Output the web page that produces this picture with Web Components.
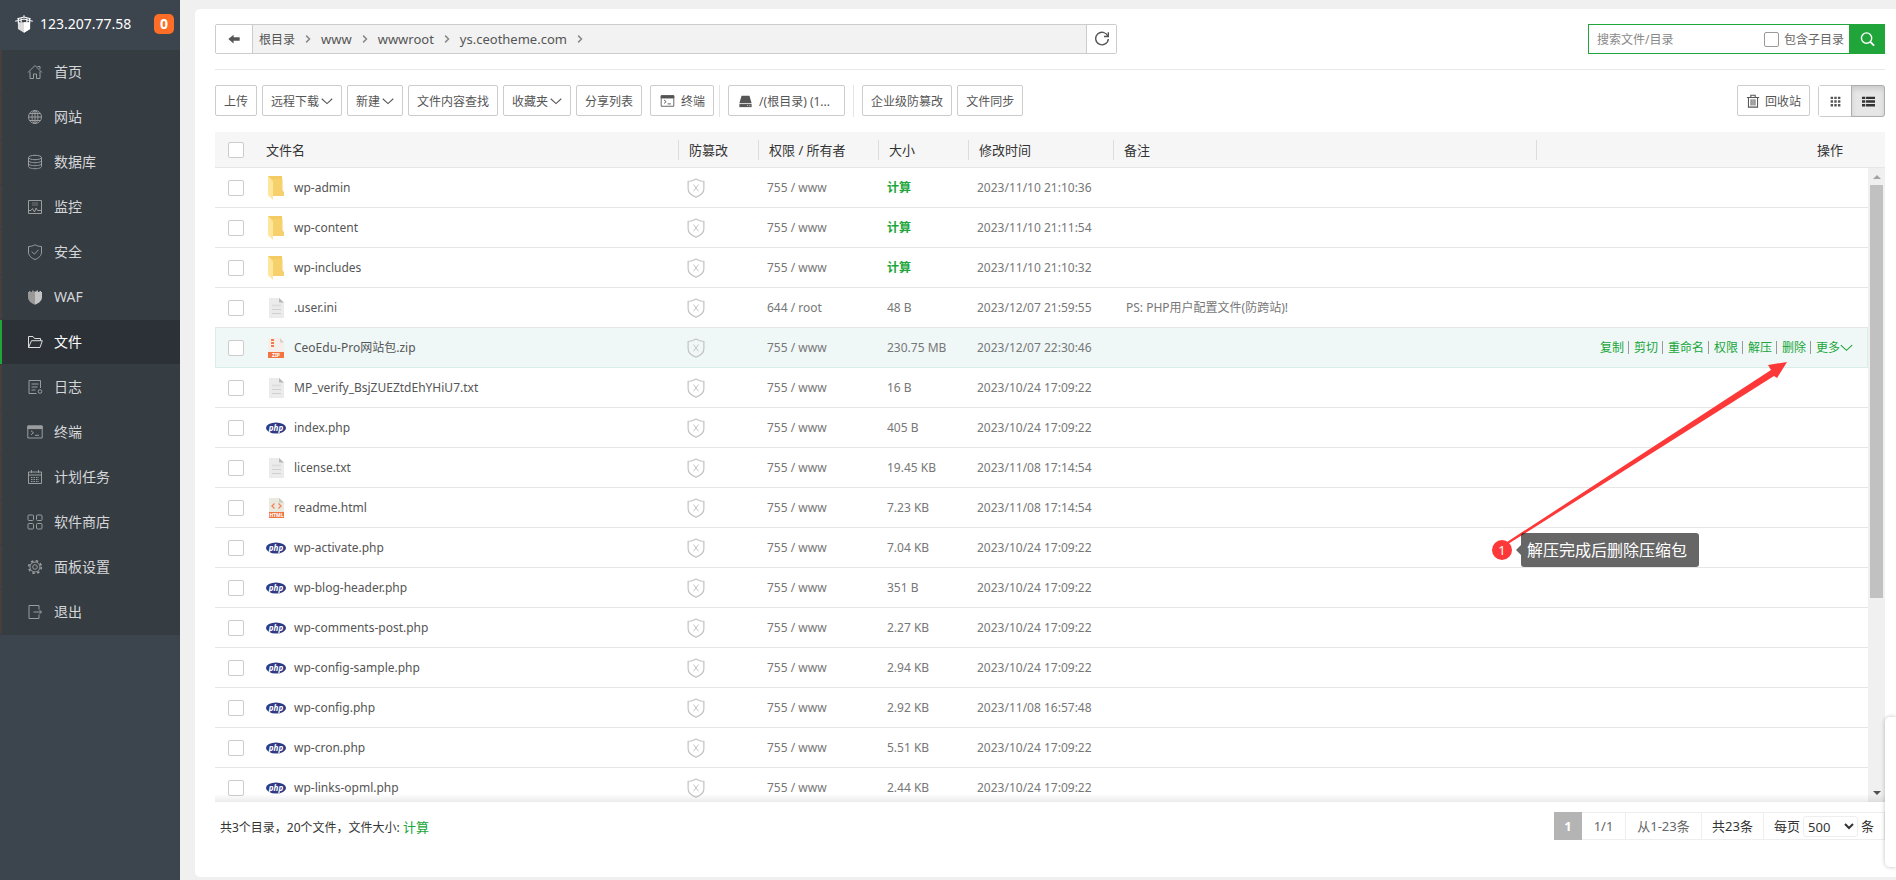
<!DOCTYPE html>
<html lang="zh-CN">
<head>
<meta charset="utf-8">
<title>文件 - 服务器面板</title>
<style>
html, body { margin: 0; height: 100%; }
body { font-family: "Noto Sans", "Noto Sans CJK SC", sans-serif; font-size: 12px; color: #666; background: #f0f0f0; overflow: hidden; }
</style>
</head>
<body>
<panel-app></panel-app>
<script>
const ICONS = {
  home: '<path d="M1 8.500 8 1.500l7 7M3 7.500V14.500h3.500V10h3v4.500H13V7.500M10.500 2.500h2.500v2.500"/>',
  globe: '<circle cx="8" cy="8" r="6.500"/><ellipse cx="8" cy="8" rx="3" ry="6.500"/><path d="M8 1.500v13M1.500 8h13M2.500 4.500h11M2.500 11.500h11"/>',
  db: '<ellipse cx="8" cy="3.500" rx="6.500" ry="2.200"/><path d="M1.500 3.500v9c0 1.200 2.900 2.200 6.500 2.200s6.500-1 6.500-2.200v-9M1.500 6.500c0 1.200 2.900 2.200 6.500 2.200s6.500-1 6.500-2.200M1.500 9.500c0 1.200 2.900 2.200 6.500 2.200s6.500-1 6.500-2.200"/>',
  monitor: '<path d="M1.500 1.500h13v13h-13z"/><path d="M5 4h6M5 6h6" stroke-opacity=".6"/><path d="M2 11.500h2l1.500-2 2 3.500 1.500-4 1.500 2.500h4"/>',
  shield: '<path d="M8 .8c2.200 1.200 4.500 1.700 6.500 1.700V8c0 3.500-2.500 6-6.500 7.500C4 14 1.500 11.500 1.500 8V2.500C3.500 2.500 5.800 2 8 .8zM4.800 7.500l2.600 2.700 4-4.400"/>',
  waf: '<path d="M1 3h1v-1h1.500v1H5V1.500h1.500v1H8V15.800C3.500 14 1 11.500 1 8z" fill="#999" stroke="none"/><path d="M15 3h-1v-1h-1.500v1H11V1.500H9.500v1H8V15.800C12.500 14 15 11.500 15 8z" fill="#c4c4c4" stroke="none"/>',
  folder: '<path d="M1.500 13.500V2.500h4.500l1.500 2h6v2.200M1.500 13.500 4.500 6.700h10.800L13 13.500z"/>',
  log: '<path d="M9.500 14.500H2V1.500h11.500v7.500M4.500 5h7M4.500 8h6M4.500 11h4"/><circle cx="13" cy="12.500" r="1.800"/>',
  term: '<path d="M.8 2h14.400v12H.8z"/><path d="M.8 2h14.400v2.600H.8z" fill="currentColor"/><path d="M4 6.800l2.500 2L4 10.800M8 11.300h4"/>',
  cal: '<path d="M1.500 3h13v11.500h-13zM1.500 6h13M4.500 1v3M11.500 1v3"/><path d="M4 8.500h8M4 10.500h8M4 12.500h8" stroke-dasharray="1.500 1"/>',
  grid: '<rect x="1" y="1" width="5.500" height="5.500" rx="1"/><rect x="9.500" y="1" width="5.500" height="5.500" rx="1"/><rect x="1" y="9.500" width="5.500" height="5.500" rx="1"/><rect x="9.500" y="9.500" width="5.500" height="5.500" rx="1"/>',
  gear: '<circle cx="8" cy="8" r="2.300"/><circle cx="8" cy="8" r="5"/><circle cx="8" cy="8" r="6.300" stroke-width="1.600" stroke-dasharray="2.500 2.448"/>',
  exit: '<path d="M12 5V1.500H2v13h10V11M6.500 8h8M12 5.500 14.500 8 12 10.500"/>',
  logo: '<path d="M2.600 6.500h10.800v6L8 15.800l-5.400-3.300z" fill="#dcdcdc" stroke="none"/><path d="M8 6.500h5.400v6L8 15.800z" fill="#fff" stroke="none"/><path d="M8 .2v2M2 3.300 8 1.800l6 1.500M.2 5.600 8 3.600l7.800 2M3 3.500v4M13 3.500v4M5.500 3v3.500M10.500 3v3.500"/>',
  back: '<path d="M1.500 8 7.500 3v3h7v4h-7v3z" fill="currentColor" stroke="none"/>',
  refresh: '<path d="M13.800 5A6.300 6.300 0 1 0 14.300 8" stroke-width="1.400"/><path d="M14.300 1.200v4.300H10" stroke-width="1.400"/>',
  right: '<path d="M5.500 3.500 10 8l-4.500 4.500" stroke-width="2" stroke="#888"/>',
  down: '<path d="M1 5 8 11.500 15 5" stroke-width="1.400"/>',
  disk: '<path d="M3.500 2h9L15 10.500H1z" fill="currentColor" stroke="none"/><path d="M1 11.500h14V15H1z" fill="currentColor" stroke="none"/><path d="M10 13.300h1M12.500 13.300h1" stroke="#fff"/>',
  trash: '<path d="M1 4h14M5.500 4V1.500h5V4M2.800 4v11h10.400V4M5.800 6v7M8 6v7M10.200 6v7" stroke-width="1.200"/>',
  tiles: '<path d="M2 2h3v3H2zM6.500 2h3v3h-3zM11 2h3v3h-3zM2 6.500h3v3H2zM6.500 6.500h3v3h-3zM11 6.500h3v3h-3zM2 11h3v3H2zM6.500 11h3v3h-3zM11 11h3v3h-3z" fill="currentColor" stroke="none"/>',
  list: '<path d="M0 2h4v3H0zM5 2h11v3H5zM0 6.500h4v3H0zM5 6.500h11v3H5zM0 11h4v3H0zM5 11h11v3H5z" fill="currentColor" stroke="none"/>',
  search: '<circle cx="7" cy="7" r="5.500" stroke-width="1.500"/><path d="m11 11 4 4" stroke-width="2"/>',
  lock: '<path d="M8 .8c2 1.300 4 1.900 6.300 2V8.500c0 3-2.300 5.300-6.300 6.800-4-1.500-6.300-3.800-6.300-6.800V2.800C4 2.700 6 2.100 8 .8z"/><path d="M6 5.200l4 5.400M10 5.200 6 10.600" stroke-width=".8"/>',
  php: '<ellipse cx="10" cy="10" rx="10" ry="5.600" fill="#2f3a85" stroke="none"/><text x="10" y="12.500" text-anchor="middle" font-family="Noto Sans" font-style="italic" font-weight="700" font-size="8" fill="#fff" stroke="none">php</text>',
  dir: '<path d="M2 0h14v13l2 6H7z" fill="#f3cb62" stroke="none"/><path d="M7 3h9.500v12.500H18V20H7z" fill="#f6d06b" stroke="none"/><path d="M2 0 7 5v19l-5-5z" fill="#ffe69b" stroke="none"/>',
  doc: '<path d="M3 0h10l5 4.500V20H3z" fill="#ebebeb" stroke="none"/><path d="M13 0v4.500h5z" fill="#b8b8b8" stroke="none"/><path d="M6 7.500h9" stroke="#ddd" stroke-width="2"/><path d="M6 11.500h9M6 15.500h9" stroke="#cfcfcf"/>',
  zip: '<path d="M2 0h12l4 4.500V15H2z" fill="#f4efea" stroke="none"/><path d="M14 0v4.500h4z" fill="#d9cfc7" stroke="none"/><path d="M6.500 1v9" stroke="#f47c4b" stroke-width="3" stroke-dasharray="2 1"/><path d="M2 14h16v6H2z" fill="#f37440" stroke="none"/><text x="10" y="19" text-anchor="middle" font-family="Noto Sans" font-weight="700" font-size="5" fill="#fff" stroke="none">ZIP</text>',
  html: '<path d="M3 0h10l5 4.500V20H3z" fill="#e9e9df" stroke="none"/><path d="M13 0v4.500h5z" fill="#c9c9bd" stroke="none"/><path d="M8.500 5.500 6 8l2.500 2.500M12.500 5.500 15 8l-2.500 2.500" stroke="#f4845a" stroke-width="1.300"/><path d="M3 14h15v6H3z" fill="#f37440" stroke="none"/><text x="10.500" y="19" text-anchor="middle" font-family="Noto Sans" font-weight="700" font-size="5" fill="#fff" stroke="none">HTML</text>'
};
const VIEW = { php: '0 0 20 20', dir: '0 0 20 24', doc: '0 0 20 20', zip: '0 0 20 20', html: '0 0 20 20', lock: '1 0 14 16' };

class Base extends HTMLElement {
  constructor() { super(); this.attachShadow({ mode: 'open' }); }
  connectedCallback() { this.shadowRoot.innerHTML = this.render(); }
}

customElements.define('ui-icon', class extends Base {
  render() {
    const n = this.getAttribute('name');
    return `<style>:host{display:inline-flex;flex:none;width:var(--icon-w,16px);height:var(--icon-h,16px)}svg{width:100%;height:100%;display:block}</style>
    <svg viewBox="${VIEW[n] || '0 0 16 16'}" fill="none" stroke="currentColor" stroke-width="1" aria-hidden="true">${ICONS[n]}</svg>`;
  }
});

customElements.define('side-item', class extends Base {
  render() {
    return `<style>
    :host{display:block;border-bottom:1px solid #353c42}
    a{display:flex;align-items:center;gap:11px;height:44px;padding-left:25px;border-left:2px solid #463f3d;color:#d5d7d9;font-size:14px;text-decoration:none}
    span{padding-bottom:2px}
    ui-icon{color:#9b9d9f;}
    :host([active]) a{background:#2c3138;border-left-color:#20a53a;color:#fff}
    :host([active]) ui-icon{color:#ddd}
    </style><a href="#"><ui-icon name="${this.getAttribute('icon')}"></ui-icon><span><slot></slot></span></a>`;
  }
});

customElements.define('side-menu', class extends Base {
  render() {
    const items = [['home','首页'],['globe','网站'],['db','数据库'],['monitor','监控'],['shield','安全'],['waf','WAF'],['folder','文件'],['log','日志'],['term','终端'],['cal','计划任务'],['grid','软件商店'],['gear','面板设置'],['exit','退出']];
    return `<style>
    :host{display:block;background:#3c444d}
    header{display:flex;align-items:center;height:50px;box-sizing:border-box;padding:0 6px 2px 15px;color:#fff;font-size:14px}
    ui-icon{--icon-w:18px;--icon-h:20px;margin-right:7px}
    span{padding-bottom:2px}
    b{margin-left:auto;width:20px;height:20px;line-height:20px;border-radius:5px;background:#ff6d26;text-align:center}
    nav{background:#353c42}
    </style><header><ui-icon name="logo"></ui-icon><span>123.207.77.58</span><b>0</b></header>
    <nav>${items.map(([i, t]) => `<side-item icon="${i}"${t === '文件' ? ' active' : ''}>${t}</side-item>`).join('')}</nav>`;
  }
});

customElements.define('path-bar', class extends Base {
  render() {
    return `<style>
    :host{display:flex;justify-content:space-between;padding-bottom:15px;border-bottom:1px solid #e8e8e8}
    .path{display:flex;width:902px;height:30px;box-sizing:border-box;border:1px solid #ccc;border-radius:2px}
    button{display:flex;align-items:center;justify-content:center;border:0;padding:0;background:#fff;color:#555;width:36px}
    .path button:last-child{width:30px;border-left:1px solid #ccc}
    .crumbs{flex:1;display:flex;align-items:center;background:#f2f2f2;border-left:1px solid #ccc;padding-left:6px}
    .crumbs a{color:#555;text-decoration:none;font-size:13px}
    .crumbs a:first-child{font-size:12px}
    .crumbs ui-icon{--icon-w:12px;--icon-h:12px;margin:0 7px}
    .back{--icon-w:14px}
    form{display:flex;width:297px;height:30px;margin:0}
    .field{flex:1;display:flex;align-items:center;border:1px solid #20a53a;border-right:0;padding:0 5px 0 8px}
    input[type=search]{flex:1;min-width:0;border:0;outline:0;padding:0;font:12px "Noto Sans","Noto Sans CJK SC",sans-serif}
    input::placeholder{color:#888}
    label{display:flex;align-items:center;gap:5px}
    input[type=checkbox]{appearance:none;width:15px;height:15px;margin:0;border:1px solid #999;border-radius:2px}
    form button{background:#20a53a;color:#fff;--icon-w:15px}
    </style>
    <div class="path"><button class="back" aria-label="返回"><ui-icon name="back"></ui-icon></button>
    <div class="crumbs">${['根目录','www','wwwroot','ys.ceotheme.com'].map(t => `<a href="#">${t}</a><ui-icon name="right"></ui-icon>`).join('')}</div>
    <button aria-label="刷新"><ui-icon name="refresh"></ui-icon></button></div>
    <form><div class="field"><input type="search" aria-label="搜索" placeholder="搜索文件/目录"><label><input type="checkbox">包含子目录</label></div>
    <button type="button" aria-label="搜索"><ui-icon name="search"></ui-icon></button></form>`;
  }
});

customElements.define('tool-button', class extends Base {
  render() {
    const i = this.getAttribute('icon');
    return `<style>
    :host{display:block}
    button{display:flex;align-items:center;width:100%;height:31px;padding:0 8px;border:1px solid #ccc;border-radius:2px;background:#fff;color:#555;font:inherit;white-space:nowrap}
    .lead{margin-right:5px;--icon-h:14px;--icon-w:var(--lead,14px)}
    .arrow{--icon-w:12px;--icon-h:12px;margin-left:2px}
    </style><button>${i ? `<ui-icon class="lead" name="${i}"></ui-icon>` : ''}<slot></slot>${this.hasAttribute('menu') ? '<ui-icon class="arrow" name="down"></ui-icon>' : ''}</button>`;
  }
});

customElements.define('tool-bar', class extends Base {
  render() {
    return `<style>
    :host{display:flex;gap:5px;padding:15px 0}
    .rule{width:1px;background:#e4e4e4;margin:0 3px 0 0}
    .gap{margin-left:3px}
    .term,.disk{--lead:17px}
    .disk{width:117px}
    .view{display:flex;height:32px;margin-left:3px;box-sizing:border-box;border:1px solid #ccc;border-radius:3px}
    .view button{display:flex;align-items:center;justify-content:center;width:32px;padding:0;border:0;background:#fff;color:#555;--icon-w:13px;--icon-h:13px}
    .view button+button{background:#e6e6e6;color:#333;box-shadow:inset 0 3px 5px rgba(0,0,0,.12);outline:1px solid #adadad;border-radius:0 2px 2px 0;margin-left:1px}
    .trash{margin-left:auto}
    </style>
    <tool-button>上传</tool-button><tool-button menu>远程下载</tool-button><tool-button menu>新建</tool-button>
    <tool-button>文件内容查找</tool-button><tool-button menu>收藏夹</tool-button><tool-button>分享列表</tool-button>
    <tool-button class="gap term" icon="term">终端</tool-button><i class="rule"></i>
    <tool-button class="disk" icon="disk">/(根目录) (1...</tool-button><i class="rule gap"></i>
    <tool-button>企业级防篡改</tool-button><tool-button>文件同步</tool-button>
    <tool-button class="trash" icon="trash">回收站</tool-button>
    <div class="view"><button aria-label="图标视图"><ui-icon name="tiles"></ui-icon></button><button aria-label="列表视图" aria-pressed="true"><ui-icon name="list"></ui-icon></button></div>`;
  }
});

const CALC = '<a href="#"><b>计算</b></a>';
const OCT = '2023/10/24 17:09:22';
const FILES = [
  ['dir','wp-admin','755 / www',CALC,'2023/11/10 21:10:36'],
  ['dir','wp-content','755 / www',CALC,'2023/11/10 21:11:54'],
  ['dir','wp-includes','755 / www',CALC,'2023/11/10 21:10:32'],
  ['doc','.user.ini','644 / root','48 B','2023/12/07 21:59:55','PS: PHP用户配置文件(防跨站)!'],
  ['zip','CeoEdu-Pro网站包.zip','755 / www','230.75 MB','2023/12/07 22:30:46'],
  ['doc','MP_verify_BsjZUEZtdEhYHiU7.txt','755 / www','16 B',OCT],
  ['php','index.php','755 / www','405 B',OCT],
  ['doc','license.txt','755 / www','19.45 KB','2023/11/08 17:14:54'],
  ['html','readme.html','755 / www','7.23 KB','2023/11/08 17:14:54'],
  ['php','wp-activate.php','755 / www','7.04 KB',OCT],
  ['php','wp-blog-header.php','755 / www','351 B',OCT],
  ['php','wp-comments-post.php','755 / www','2.27 KB',OCT],
  ['php','wp-config-sample.php','755 / www','2.94 KB',OCT],
  ['php','wp-config.php','755 / www','2.92 KB','2023/11/08 16:57:48'],
  ['php','wp-cron.php','755 / www','5.51 KB',OCT],
  ['php','wp-links-opml.php','755 / www','2.44 KB',OCT]
];

customElements.define('file-table', class extends Base {
  render() {
    const acts = ['复制','剪切','重命名','权限','解压','删除'].map(t => `<a href="#">${t}</a><i></i>`).join('') + '<a href="#">更多<ui-icon class="more" name="down"></ui-icon></a>';
    const rows = FILES.map(([ic, name, perm, size, time, note = '']) => `<tr${ic === 'zip' ? ' class="on"' : ''}>
      <td class="c"><input type="checkbox" aria-label="${name}"></td>
      <td><a class="name" href="#"><ui-icon class="${ic}" name="${ic}"></ui-icon>${name}</a></td>
      <td><ui-icon class="lock" name="lock"></ui-icon></td><td>${perm}</td><td>${size}</td><td>${time}</td><td class="note">${note}</td>
      <td class="ops">${ic === 'zip' ? `<div>${acts}</div>` : ''}</td></tr>`).join('');
    return `<style>
    :host{display:block;position:relative;flex:1;min-height:0;overflow:hidden}
    table{width:100%;border-collapse:separate;border-spacing:0;table-layout:fixed}
    th{height:35px;padding:0 0 0 10px;border-bottom:1px solid #e6e6e6;background:#f6f6f6;color:#333;font-size:13px;font-weight:400;text-align:left}
    th.s{background:linear-gradient(#ddd,#ddd) right center/1px 20px no-repeat #f6f6f6}
    td{height:39px;padding:0 0 0 8px;border-bottom:1px solid #e6e6e6;color:#777;line-height:20px;white-space:nowrap}
    th.c,td.c{padding:0 0 0 13px}
    .on td{background:#eff8f7;border-bottom-color:#d9ede9}
    .on td.c{border-left:1px solid #d9ede9;padding-left:12px}
    .on td.ops{border-right:1px solid #d9ede9}
    th:nth-child(2){padding-left:8px}
    input{appearance:none;display:block;width:16px;height:16px;margin:0;border:1px solid #ccc;border-radius:2px;background:#fff}
    a{color:#20a53a;text-decoration:none}
    .name{display:flex;align-items:center;gap:8px;color:#555;--icon-w:20px;--icon-h:20px}
    .name .dir{--icon-h:24px}
    .lock{display:flex;--icon-w:18px;--icon-h:20px;color:#c4c4c4}
    td.note{padding-left:12px}
    td.ops{padding-right:14px}
    .ops div{display:flex;justify-content:flex-end;align-items:center}
    .ops i{width:1px;height:13px;background:#999;margin:0 5px 0 4px}
    .ops a{display:flex;align-items:center}
    .more{--icon-w:13px;--icon-h:13px}
    th:nth-child(8){text-align:right;padding-right:25px}
    .bar{position:absolute;top:36px;right:0;bottom:0;width:17px;background:#f0f0f0;display:flex;flex-direction:column;align-items:center;box-sizing:border-box;padding:7px 0}
    .thumb{width:13px;height:413px;background:#c1c1c1;margin-top:6px}
    .up,.down{border:4px solid transparent;border-top:0;border-bottom-color:#a3a3a3}
    .down{margin-top:auto;border-bottom:0;border-top:4px solid #505050}
    .fade{position:absolute;left:0;right:0;bottom:0;height:8px;background:linear-gradient(transparent,rgba(0,0,0,.08))}
    </style>
    <table><colgroup><col style="width:43px"><col><col style="width:80px"><col style="width:120px"><col style="width:90px"><col style="width:145px"><col style="width:423px"><col style="width:331px"><col style="width:17px"></colgroup>
    <thead><tr><th class="c"><input type="checkbox" aria-label="全选"></th><th class="s">文件名</th><th class="s">防篡改</th><th class="s">权限 / 所有者</th><th class="s">大小</th><th class="s">修改时间</th><th class="s">备注</th><th>操作</th><th></th></tr></thead>
    <tbody>${rows}</tbody></table>
    <div class="bar"><span class="up"></span><span class="thumb"></span><span class="down"></span></div><div class="fade"></div>`;
  }
});

customElements.define('file-footer', class extends Base {
  render() {
    return `<style>
    :host{display:flex;justify-content:space-between;height:75px;box-sizing:border-box;padding:10px 0 0 5px;color:#333}
    p{margin:0;line-height:30px}
    a{color:#20a53a;text-decoration:none;font-size:13px}
    .pages{display:flex;height:28px;box-sizing:border-box;font-size:13px;line-height:26px;border:1px solid #eee}
    .pages>*{border-left:1px solid #eee;box-sizing:border-box;text-align:center}
    .cur{width:28px;margin:-1px 0 -1px -1px;line-height:28px;border:0;background:#b4b4b4;color:#fff;font-weight:700}
    .of{width:43px;color:#666;border-left:0}
    .range{width:76px;color:#666}
    .total{width:62px}
    label{display:flex;align-items:center;width:121px;padding-left:10px}
    select{width:55px;height:21px;margin:0 3px;padding:0;border:1px solid #eee;border-radius:3px;background:#fff;color:#333;font:inherit;line-height:18px}
    </style><p>共3个目录，20个文件，文件大小: <a href="#">计算</a></p>
    <div class="pages"><span class="cur">1</span><span class="of">1/1</span><span class="range">从1-23条</span><span class="total">共23条</span>
    <label>每页<select><option>500</option></select>条</label></div>`;
  }
});

customElements.define('step-note', class extends Base {
  render() {
    return `<style>
    :host{display:block;width:296px;height:206px;pointer-events:none}
    svg{position:absolute;inset:0;width:296px;height:206px}
    b,span{position:absolute;box-sizing:border-box}
    b{left:0;bottom:7px;width:20px;height:20px;border-radius:10px;background:#fc3838;color:#fff;font-weight:400;font-size:13px;line-height:20px;text-align:center}
    span{left:29px;bottom:0;width:178px;height:34px;border-radius:3px;background:rgba(0,0,0,.6);color:#fff;font-size:16px;line-height:34px;padding-left:6px;white-space:nowrap}
    span::before{content:"";position:absolute;left:-5px;top:12px;border:5px solid transparent;border-left:0;border-right-color:#666}
    </style><svg viewBox="0 0 296 206" aria-hidden="true"><path d="M15 181 279 9l-3-5 19-3-10 16-3-2L16 183z" fill="#fc3838"/></svg><b>1</b><span>解压完成后删除压缩包</span>`;
  }
});

customElements.define('panel-app', class extends Base {
  render() {
    return `<style>
    :host{display:grid;grid-template-columns:180px 1fr;height:100vh}
    main{position:relative;display:flex;flex-direction:column;margin:9px 0 3px 15px;padding:15px 11px 0 20px;background:#fff;border-radius:5px 0 0 5px;min-width:0;min-height:0}
    step-note{position:absolute;right:108px;top:352px}
    .dock{position:absolute;right:0;bottom:10px;width:11px;height:150px;box-sizing:border-box;background:#fff;border-radius:5px 0 0 5px;box-shadow:0 0 4px rgba(0,0,0,.25);clip-path:inset(-5px 0 -5px -5px)}
    </style><side-menu></side-menu>
    <main><path-bar></path-bar><tool-bar></tool-bar><file-table></file-table><file-footer></file-footer><step-note></step-note><aside class="dock"></aside></main>`;
  }
});
</script>
</body>
</html>
